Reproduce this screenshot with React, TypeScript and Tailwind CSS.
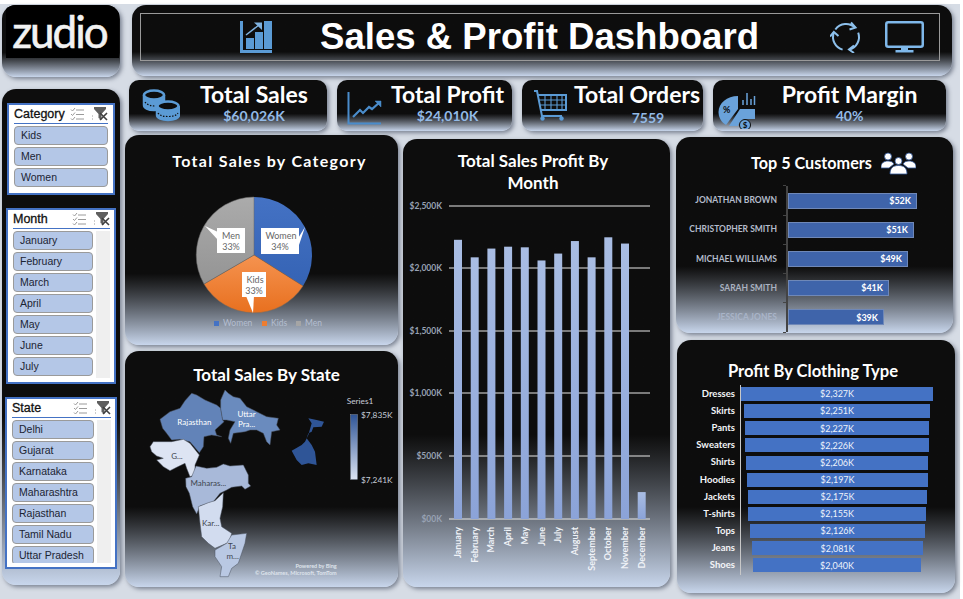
import { ReactNode } from 'react'

const panel = 'bg-linear-to-b from-[#0d0d0d] from-[66%] to-[#c8d6ec] shadow-[2px_2px_4px_rgba(60,70,90,0.6)]'

const months = [
  ['January', 2230], ['February', 2090], ['March', 2160], ['April', 2175], ['May', 2170], ['June', 2065],
  ['July', 2120], ['August', 2220], ['September', 2090], ['October', 2250], ['November', 2200], ['December', 215],
] as const

const clothing = [
  ['Dresses', '$2,327K', 192, 0], ['Skirts', '$2,251K', 186, 3], ['Pants', '$2,227K', 184, 4], ['Sweaters', '$2,226K', 184, 4],
  ['Shirts', '$2,206K', 182, 5], ['Hoodies', '$2,197K', 181, 6], ['Jackets', '$2,175K', 179, 7], ['T-shirts', '$2,155K', 178, 7],
  ['Tops', '$2,126K', 175, 9], ['Jeans', '$2,081K', 171, 11], ['Shoes', '$2,040K', 168, 12],
] as const

const customers = [
  ['JONATHAN BROWN', '$52K', 129, 'text-[#b4bccb]'],
  ['CHRISTOPHER SMITH', '$51K', 126, 'text-[#b4bccb]'],
  ['MICHAEL WILLIAMS', '$49K', 120, 'text-[#b4bccb]'],
  ['SARAH SMITH', '$41K', 101, 'text-[#aab2c0]'],
  ['JESSICA JONES', '$39K', 96, 'text-[#a9b4c8]'],
] as const

const ListIcon = () => (
  <svg width="14" height="14" viewBox="0 0 14 14" fill="none" stroke="#9a9a9a" strokeWidth="1">
    <path d="M1 2.500l1.500 1.500L5 1M1 7l1.500 1.500L5 5.500M1 11.500L2.500 13 5 10" />
    <path d="M6 3h8M6 7.500h8M6 12h8" />
  </svg>
)

const ClearIcon = () => (
  <svg width="16" height="14" viewBox="0 0 16 14">
    <path d="M2 0h12v2L9.500 7v6L6.500 11V7L2 2z" fill="#5f5f5f" />
    <path d="M8 6l7 7M15 6l-7 7" stroke="#3f3f3f" strokeWidth="1.600" />
    <path d="M0 9h1M0 12h1" stroke="#9a9a9a" />
  </svg>
)

const Slicer = ({ title, items, scroll, className }: { title: string; items: string[]; scroll?: boolean; className: string }) => (
  <div className={`bg-white border-2 border-[#4472c4] flex flex-col pl-[5px] ${scroll ? 'pr-[4px]' : 'pr-[5px]'} ${className}`}>
    <div className="flex items-center justify-between h-[19px] border-b border-[#4472c4] shrink-0">
      <span className="text-[12.500px] leading-none text-[#111] [-webkit-text-stroke:0.3px_#111] font-['Liberation_Sans',sans-serif]">{title}</span>
      <div className="flex items-center gap-[8px]">
        <ListIcon />
        <ClearIcon />
      </div>
    </div>
    <div className="flex flex-1 overflow-hidden mt-[2px] mb-[4px] gap-[3px]">
      <div className="flex-1 flex flex-col gap-[2px]">
        {items.map((item) => (
          <div
            key={item}
            className="h-[19px] shrink-0 bg-[#b4c7e7] border border-[#9a9a9a] rounded-[4px] pl-[6px] text-[10.500px] leading-[17px] text-[#1b2433] whitespace-nowrap font-['Liberation_Sans',sans-serif]"
          >
            {item}
          </div>
        ))}
      </div>
      {scroll && <div className="w-[14px] bg-[#efefef]" />}
    </div>
  </div>
)

const Kpi = ({ icon, title, value, className, iconClass, textClass, valueClass }: { icon: ReactNode; title: string; value: string; className: string; iconClass: string; textClass: string; valueClass?: string }) => (
  <div className={`${panel} rounded-[10px] h-[51px] flex items-center shrink-0 ${className}`}>
    <div className={`shrink-0 flex items-center ${iconClass}`}>{icon}</div>
    <div className={`flex flex-col items-center self-start pt-[1px] font-['Lato',sans-serif] font-bold ${textClass}`}>
      <span className="text-[23px] leading-[27px] text-white whitespace-nowrap">{title}</span>
      <span className={`text-[14px] leading-[14px] mt-[1px] text-[#93bae6] ${valueClass ?? ''}`}>{value}</span>
    </div>
  </div>
)

const CoinsIcon = () => (
  <svg width="38" height="33" viewBox="0 0 38 33">
    <g fill="#0d0d0d" stroke="#5b9bd5" strokeWidth="2.500">
      <path d="M2 6v10c0 3 4 5 10 5s10-2 10-5V6" fill="#5b9bd5" />
      <ellipse cx="12" cy="6" rx="10" ry="4.500" />
      <path d="M15 17v9c0 3 5 5 11 5s11-2 11-5v-9" fill="#5b9bd5" />
      <ellipse cx="26" cy="17" rx="10.500" ry="4.500" />
    </g>
    <path d="M3 13c2 3 6 4 10 4" fill="none" stroke="#0d0d0d" strokeWidth="1.200" strokeDasharray="1.500 1.500" />
    <path d="M16 24c2 3 6 3.500 10 3.500s8-.5 10-3.500" fill="none" stroke="#0d0d0d" strokeWidth="1.200" strokeDasharray="1.500 1.500" />
    <ellipse cx="26" cy="17" rx="6.500" ry="2" fill="#0d0d0d" />
  </svg>
)

const LineIcon = () => (
  <svg width="36" height="33" viewBox="0 0 36 33" fill="none" stroke="#4a8ccb">
    <path d="M1.500 0v31.500H34" strokeWidth="2" />
    <path d="M6 25l7-7 3 3 6-6 3 2 8-7" strokeWidth="2.200" />
    <path d="M28 9h6v6z" fill="#4a8ccb" strokeWidth="0.500" />
  </svg>
)

const CartIcon = () => (
  <svg width="33" height="31" viewBox="0 0 33 31" fill="none" stroke="#5b9bd5">
    <path d="M0 1h3l5 25h20" strokeWidth="2" />
    <path d="M4 5h28v15H7" strokeWidth="2" />
    <path d="M5 10h27M6 15h26M11 5v15M17 5v15M23 5v15M28 5v15" strokeWidth="1.100" />
    <circle cx="8.500" cy="28.500" r="2.200" fill="#5b9bd5" stroke="none" />
    <circle cx="27.500" cy="28.500" r="2.200" fill="#5b9bd5" stroke="none" />
  </svg>
)

const MarginIcon = () => (
  <svg width="38" height="38" viewBox="0 0 38 38">
    <path d="M20 5v13L8 34C3 31 .5 26 .5 21 .5 12 9 5 20 5z" fill="#6aa2da" />
    <path d="M22 18h15v10h-7c-5 0-9 3-10 7L11 35z" fill="#6aa2da" />
    <circle cx="27" cy="34" r="5.500" fill="#6aa2da" stroke="#0d0d0d" strokeWidth="1" />
    <text x="27" y="37" fontSize="8" fill="#0d0d0d" textAnchor="middle" fontFamily="Lato, sans-serif" fontWeight="700">$</text>
    <text x="5" y="22" fontSize="9" fill="#0d0d0d" fontFamily="Lato, sans-serif" fontWeight="700">%</text>
    <path d="M25 14V9M29 14V2M33 14V8M36.500 14V5" stroke="#6aa2da" strokeWidth="1.500" />
  </svg>
)

const ReportIcon = () => (
  <svg width="32" height="32" viewBox="0 0 32 32" fill="#5b9bd5">
    <path d="M0 0h3v29h29v3H0z" />
    <path d="M6 17h8v11H6zM15 11h8v17h-8zM24 0h8v28h-8z" />
    <path d="M6 14L19 4" stroke="#7fb2e0" strokeWidth="1.500" />
    <path d="M14 1.500h8v7.500z" fill="#7fb2e0" />
  </svg>
)

const RefreshIcon = () => (
  <svg width="32" height="32" viewBox="0 0 32 32" fill="none" stroke="#8dc0ec" strokeWidth="2">
    <path d="M5.350 8.540A13 13 0 0 1 25.200 6.800" />
    <path d="M21 1.500l4.500 5-6 2" />
    <path d="M28.200 11.600A13 13 0 0 1 19.400 28.600" />
    <path d="M24 24.500l-5 4 5 3.500" />
    <path d="M12.600 28.600A13 13 0 0 1 3.800 11.600" />
    <path d="M0 15.500l3.800-4.500 4.700 4" />
  </svg>
)

const MonitorIcon = () => (
  <svg width="39" height="32" viewBox="0 0 39 32">
    <rect x="1.250" y="1.250" width="36.500" height="24.500" rx="2" fill="#0d0d0d" stroke="#7fb8ea" strokeWidth="2.500" />
    <path d="M16 27h7v2h5.500v2.500h-18V29H16z" fill="#7fb8ea" />
  </svg>
)

const PeopleIcon = () => (
  <svg width="35" height="23" viewBox="0 0 35 23" fill="#fff" stroke="#2f5597" strokeWidth="0.800">
    <circle cx="7" cy="4.500" r="3.500" />
    <circle cx="28" cy="4.500" r="3.500" />
    <path d="M0 15c0-4 3-6 7-6 3 0 5 1 6 3l-5 4v0H0zM35 15c0-4-3-6-7-6-3 0-5 1-6 3l5 4h8z" />
    <circle cx="17.500" cy="9" r="3.500" />
    <path d="M9 22c0-6 3-8.500 8.500-8.500S26 16 26 22z" />
  </svg>
)

// drawn in page coordinates so the numbers can be read off the screenshot
const Pie = () => (
  <svg width="273" height="170" viewBox="125 171 273 170" className="shrink-0">
    <defs>
      <linearGradient id="pb" x1="0" y1="0" x2="0" y2="1"><stop offset="0" stopColor="#4472c4" /><stop offset="1" stopColor="#3563b4" /></linearGradient>
      <linearGradient id="po" x1="0" y1="0" x2="0" y2="1"><stop offset="0" stopColor="#f59350" /><stop offset="1" stopColor="#e8701f" /></linearGradient>
      <linearGradient id="pg" x1="0" y1="0" x2="0" y2="1"><stop offset="0" stopColor="#ababab" /><stop offset="1" stopColor="#949494" /></linearGradient>
    </defs>
    <path d="M254 197A58 58 0 0 1 303 286L254 255Z" fill="url(#pb)" />
    <path d="M303 286A58 58 0 0 1 204 284L254 255Z" fill="url(#po)" stroke="#8a6a50" strokeWidth="0.500" />
    <path d="M204 284A58 58 0 0 1 254 197L254 255Z" fill="url(#pg)" stroke="#666" strokeWidth="0.500" />
    <rect x="261" y="228" width="38" height="26" fill="#fff" />
    <path d="M297 240l8-13-6 18z" fill="#fff" />
    <rect x="217" y="228" width="28" height="25" fill="#fff" />
    <path d="M218 232l-13-6 13 14z" fill="#fff" />
    <rect x="242" y="272" width="24" height="25" fill="#fff" />
    <path d="M246 296l7 17 1-17z" fill="#fff" />
    <g fontFamily="Lato, sans-serif" fontSize="9" fill="#666" textAnchor="middle">
      <text x="281" y="239">Women</text><text x="280" y="250">34%</text>
      <text x="231" y="239">Men</text><text x="231" y="250">33%</text>
      <text x="255" y="283">Kids</text><text x="254" y="294">33%</text>
    </g>
    <g fontFamily="Lato, sans-serif" fontSize="8.500" fill="#b4bed0">
      <rect x="214" y="321" width="5" height="5" fill="#4472c4" /><text x="223" y="326">Women</text>
      <rect x="262" y="321" width="5" height="5" fill="#ed7d31" /><text x="271" y="326">Kids</text>
      <rect x="296" y="321" width="5" height="5" fill="#a5a5a5" /><text x="305" y="326">Men</text>
    </g>
  </svg>
)

// outlines traced from a 3x crop, hence the large viewBox units
const StateMap = () => (
  <svg width="273" height="200" viewBox="375 15 819 600" className="shrink-0">
    <defs>
      <linearGradient id="scale" x1="0" y1="0" x2="0" y2="1"><stop offset="0" stopColor="#2f5597" /><stop offset="1" stopColor="#dbe3f2" /></linearGradient>
    </defs>
    <g stroke="#4a5361" strokeWidth="1.500">
      <polygon points="480,118 510,95 540,85 555,62 575,40 590,45 615,60 650,75 662,85 668,120 672,125 645,150 650,165 665,170 635,165 612,170 610,200 598,218 570,185 540,178 515,180 500,160 488,145" fill="#6283b8" />
      <polygon points="662,60 675,30 685,40 700,50 720,55 740,80 770,95 800,110 835,115 830,135 840,150 815,155 810,195 800,185 790,160 770,150 750,150 735,155 700,160 692,190 685,175 690,150 705,125 680,120 668,120 662,85" fill="#6a8bbe" />
      <polygon points="450,200 460,185 515,185 550,178 570,190 598,225 585,255 585,285 570,290 560,265 555,250 530,262 510,272 490,260 470,240 490,235 470,228 455,215" fill="#dde4f3" />
      <polygon points="557,295 575,290 588,258 620,265 650,262 670,252 690,258 730,255 745,285 745,310 752,318 735,328 725,318 695,322 680,330 660,340 640,365 600,378 590,402 578,380 568,340 558,320" fill="#a8b9d9" />
      <polygon points="595,380 625,368 645,362 670,338 668,380 660,415 665,440 695,460 690,480 680,490 645,505 625,490 605,470 600,430" fill="#d2dcef" />
      <polygon points="645,510 680,490 695,465 740,460 735,490 725,520 715,550 695,565 685,590 660,590 665,560 645,530" fill="#b9c8e3" />
    </g>
    <polygon points="925,115 950,120 972,125 965,140 940,142 935,155 925,160 920,175 935,195 945,215 950,255 925,250 905,255 890,240 875,212 905,195 915,185 925,165 935,130" fill="#2f5597" />
    <g fontFamily="Lato, sans-serif" fontSize="24" textAnchor="middle">
      <g fill="#fff">
        <text x="583" y="135">Rajasthan</text>
        <text x="740" y="110">Uttar</text>
        <text x="740" y="142">Pra...</text>
      </g>
      <g fill="#3f4650">
        <text x="531" y="237">G...</text>
        <text x="625" y="318">Maharas...</text>
        <text x="632" y="438">Kar...</text>
        <text x="696" y="507">Ta</text>
        <text x="698" y="538">m...</text>
      </g>
    </g>
    <g fontFamily="Lato, sans-serif" fontSize="25" fill="#c6ccd8">
      <text x="1040" y="71">Series1</text>
      <text x="1083" y="114">$7,835K</text>
      <text x="1083" y="308">$7,241K</text>
    </g>
    <rect x="1052" y="104" width="20" height="194" fill="url(#scale)" stroke="#8c98ac" strokeWidth="1.500" />
    <g fontFamily="Lato, sans-serif" fontSize="16.500" fill="#dfe4ec" fontWeight="700" textAnchor="end">
      <text x="1010" y="564">Powered by Bing</text>
      <text x="1010" y="584">© GeoNames, Microsoft, TomTom</text>
    </g>
  </svg>
)

const MonthChart = () => {
  const base = 519
  const perK = 313 / 2500
  const grid = [['$2,500K', 206], ['$2,000K', 268], ['$1,500K', 331], ['$1,000K', 393], ['$500K', 456], ['$00K', 519]] as const
  return (
    <svg width="267" height="390" viewBox="403 197 267 390" className="shrink-0">
      <defs>
        <linearGradient id="bar" x1="0" y1="0" x2="0" y2="1"><stop offset="0" stopColor="#a9bde3" /><stop offset="1" stopColor="#8ba3d8" /></linearGradient>
      </defs>
      <g fontFamily="Lato, sans-serif" fontSize="8.500" fontWeight="700" textAnchor="end">
        {grid.map(([label, y]) => (
          <g key={label}>
            <line x1="449" x2="650" y1={y} y2={y} stroke="#e8e8e8" strokeWidth="1" />
            <text x="442" y={y + 3} fill="#98a2b3">{label}</text>
          </g>
        ))}
      </g>
      {months.map(([name, v], i) => {
        const x = 458 + i * 16.700
        return (
          <g key={name}>
            <rect x={x - 4} y={base - v * perK} width="8" height={v * perK} fill="url(#bar)" />
            <text
              transform={`translate(${x + 3} 527) rotate(-90)`}
              textAnchor="end"
              fontFamily="Lato, sans-serif"
              fontSize="9"
              fontWeight="700"
              fill="#f0f3f8"
            >
              {name}
            </text>
          </g>
        )
      })}
    </svg>
  )
}

export default function App() {
  return (
    <div className="w-[963px] h-[599px] bg-white overflow-hidden">
      <div className="w-[960px] h-[595px] mt-[4px] bg-[#d6dce5] flex pt-[1px]">
        {/* slicer column */}
        <div className="w-[118px] ml-[2px] shrink-0 flex flex-col">
          <div className={`${panel} h-[72px] rounded-[14px] overflow-hidden shrink-0`}>
            <div className="h-[53px] ml-[4px] mr-[1px] pr-[6px] bg-black flex justify-center">
              <span className="text-[44px] leading-[53px] pb-[3px] text-[#f2f2f2] [-webkit-text-stroke:0.6px_#f2f2f2] font-['Lato',sans-serif] tracking-[-2px]">zudio</span>
            </div>
          </div>
          <div className={`${panel} mt-[12px] h-[496px] rounded-[14px] flex flex-col items-center pt-[14px] shrink-0`}>
            <Slicer title="Category" items={['Kids', 'Men', 'Women']} className="w-[108px] h-[92px]" />
            <Slicer title="Month" scroll items={['January', 'February', 'March', 'April', 'May', 'June', 'July']} className="w-[110px] h-[176px] mt-[13px]" />
            <Slicer title="State" scroll items={['Delhi', 'Gujarat', 'Karnataka', 'Maharashtra', 'Rajasthan', 'Tamil Nadu', 'Uttar Pradesh']} className="w-[112px] h-[172px] mt-[13px]" />
          </div>
        </div>

        <div className="flex-1 min-w-0 flex flex-col">
          {/* header */}
          <div className={`${panel} ml-[12px] w-[820px] h-[71px] rounded-[14px] pt-[8px] pl-[8px] pr-[12px] shrink-0`}>
            <div className="h-[48px] border border-[#9a9a9a] flex items-center pl-[99px]">
              <ReportIcon />
              <span className="ml-[48px] text-[36.600px] leading-none font-bold text-white font-['Liberation_Sans',sans-serif] whitespace-nowrap">
                Sales &amp; Profit Dashboard
              </span>
              <div className="ml-[71px]"><RefreshIcon /></div>
              <div className="ml-[23px]"><MonitorIcon /></div>
            </div>
          </div>

          {/* kpi row */}
          <div className="flex ml-[9px] mt-[4px] gap-[10px]">
            <Kpi icon={<CoinsIcon />} title="Total Sales" value="$60,026K" className="w-[198px]" iconClass="pl-[13px]" textClass="ml-[15px] w-[118px]" />
            <Kpi icon={<LineIcon />} title="Total Profit" value="$24,010K" className="w-[175px]" iconClass="pl-[10px] pt-[6px]" textClass="ml-[8px] w-[113px]" />
            <Kpi icon={<CartIcon />} title="Total Orders" value="7559" className="w-[181px]" iconClass="pl-[12px]" textClass="ml-[9px] w-[122px]" valueClass="mt-[3px] ml-[22px]" />
            <Kpi icon={<MarginIcon />} title="Profit Margin" value="40%" className="w-[233px]" iconClass="pl-[5px] pt-[8px]" textClass="ml-[27px] w-[133px]" />
          </div>

          {/* chart columns */}
          <div className="flex ml-[5px]">
            <div className="w-[273px] shrink-0 flex flex-col mt-[4px]">
              <div className={`${panel} h-[210px] rounded-[14px] flex flex-col items-center pt-[16px]`}>
                <h2 className="text-[16px] leading-[20px] pl-[16px] font-bold text-white tracking-[1.300px] font-['Lato',sans-serif]">Total Sales by Category</h2>
                <Pie />
              </div>
              <div className={`${panel} h-[236px] mt-[6px] rounded-[14px] flex flex-col items-center pt-[14px]`}>
                <h2 className="text-[17px] leading-[20px] pl-[10px] font-bold text-white font-['Lato',sans-serif]">Total Sales By State</h2>
                <StateMap />
              </div>
            </div>

            <div className={`${panel} w-[267px] h-[448px] ml-[5px] mt-[8px] shrink-0 rounded-[14px] flex flex-col items-center pt-[11px]`}>
              <h2 className="text-[17px] leading-[22px] font-bold text-white text-center font-['Lato',sans-serif] w-[170px] h-[47px] mr-[7px]">Total Sales Profit By Month</h2>
              <MonthChart />
            </div>

            <div className="w-[279px] ml-[6px] shrink-0 flex flex-col mt-[6px]">
              <div className={`${panel} w-[277px] h-[196px] rounded-[14px] flex flex-col`}>
                <div className="flex items-center h-[23px] mt-[15px] pl-[75px] gap-[9px] shrink-0">
                  <h2 className="text-[16.200px] leading-none font-bold text-white font-['Lato',sans-serif]">Top 5 Customers</h2>
                  <PeopleIcon />
                </div>
                <div className="ml-[110px] mt-[11px] border-l-2 border-[#444] h-[146px] flex flex-col justify-around relative">
                  <div className="absolute -left-[5px] -top-[1px] w-[3px] h-[1px] bg-[#444]" />
                  <div className="absolute -left-[5px] -bottom-[1px] w-[3px] h-[1px] bg-[#444]" />
                  {customers.map(([name, val, w, tone], i) => (
                    <div key={name} className="relative flex items-center h-[16px]">
                      {i > 0 && <div className="absolute -left-[5px] -top-[7px] w-[3px] h-[1px] bg-[#444]" />}
                      <span className={`absolute right-[calc(100%+11px)] whitespace-nowrap text-[8.500px] font-bold font-['Lato',sans-serif] ${tone}`}>{name}</span>
                      <div className="h-[16px] bg-[#3f64aa] border border-[#6f88b8] flex items-center justify-end pr-[5px] text-[9px] font-bold text-white font-['Lato',sans-serif]" style={{ width: w }}>
                        {val}
                      </div>
                    </div>
                  ))}
                </div>
              </div>
              <div className={`${panel} w-[278px] h-[253px] mt-[7px] ml-[1px] rounded-[14px] flex flex-col`}>
                <h2 className="text-[16.600px] leading-[20px] mt-[21px] pr-[6px] font-bold text-white text-center font-['Lato',sans-serif] shrink-0">Profit By Clothing Type</h2>
                <div className="ml-[63px] mt-[4px] border-l border-[#c8c8c8] w-[200px] flex flex-col pt-[2px] pb-[3px] gap-[3.150px] shrink-0">
                  {clothing.map(([name, val, w, off]) => (
                    <div key={name} className="relative flex items-center h-[14px]">
                      <span className="absolute right-[calc(100%+6px)] text-[9.500px] font-bold text-[#f3f4f7] whitespace-nowrap font-['Lato',sans-serif]">{name}</span>
                      <div className="h-[14px] bg-[#4472c4] flex items-center justify-center text-[9px] text-[#eef2fb] font-['Lato',sans-serif]" style={{ width: w, marginLeft: off }}>
                        {val}
                      </div>
                    </div>
                  ))}
                </div>
              </div>
            </div>
          </div>
        </div>
      </div>
    </div>
  )
}
